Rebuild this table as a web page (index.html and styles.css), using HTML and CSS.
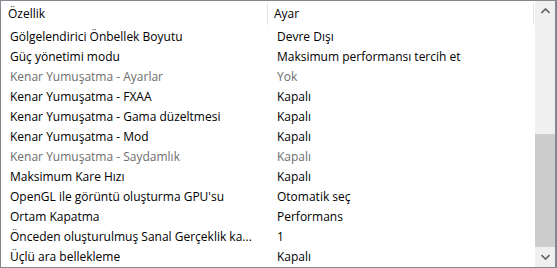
FILE: index.html
```html
<!DOCTYPE html>
<html lang="tr">
<head>
<meta charset="utf-8">
<link rel="stylesheet" href="styles.css">
</head>
<body>
<div class="listview">
  <div class="main">
    <div class="header">
      <div class="hcell c1">Özellik</div>
      <div class="hcell c2">Ayar</div>
      <div class="hcell c3"></div>
    </div>
    <div class="rows">
      <div class="row"><span class="c1">Gölgelendirici Önbellek Boyutu</span><span class="c2">Devre Dışı</span></div>
      <div class="row"><span class="c1">Güç yönetimi modu</span><span class="c2">Maksimum performansı tercih et</span></div>
      <div class="row dim"><span class="c1">Kenar Yumuşatma - Ayarlar</span><span class="c2">Yok</span></div>
      <div class="row"><span class="c1">Kenar Yumuşatma - FXAA</span><span class="c2">Kapalı</span></div>
      <div class="row"><span class="c1">Kenar Yumuşatma - Gama düzeltmesi</span><span class="c2">Kapalı</span></div>
      <div class="row"><span class="c1">Kenar Yumuşatma - Mod</span><span class="c2">Kapalı</span></div>
      <div class="row dim"><span class="c1">Kenar Yumuşatma - Saydamlık</span><span class="c2">Kapalı</span></div>
      <div class="row"><span class="c1">Maksimum Kare Hızı</span><span class="c2">Kapalı</span></div>
      <div class="row"><span class="c1">OpenGL ile görüntü oluşturma GPU'su</span><span class="c2">Otomatik seç</span></div>
      <div class="row"><span class="c1">Ortam Kapatma</span><span class="c2">Performans</span></div>
      <div class="row"><span class="c1">Önceden oluşturulmuş Sanal Gerçeklik ka...</span><span class="c2">1</span></div>
      <div class="row"><span class="c1">Üçlü ara bellekleme</span><span class="c2">Kapalı</span></div>
    </div>
  </div>
  <div class="scrollbar">
    <div class="arrow up"><svg width="9" height="6" viewBox="0 0 9 6"><path d="M0.5 5 L4.5 1 L8.5 5" fill="none" stroke="#606060" stroke-width="1.6"/></svg></div>
    <div class="track">
      <div class="gap"></div>
      <div class="thumb"></div>
    </div>
    <div class="arrow down"><svg width="9" height="6" viewBox="0 0 9 6"><path d="M0.5 1 L4.5 5 L8.5 1" fill="none" stroke="#606060" stroke-width="1.6"/></svg></div>
  </div>
</div>
</body>
</html>
```
FILE: styles.css
```css
html, body {
  margin: 0;
  padding: 0;
  background: #ffffff;
}
.listview {
  width: 557px;
  height: 268px;
  box-sizing: border-box;
  border: 1px solid #828790;
  border-right-width: 2px;
  display: flex;
  font-family: "Open Sans", "Noto Sans", sans-serif;
  font-size: 12px;
  color: #000;
  overflow: hidden;
}
.main {
  flex: 1;
  display: flex;
  flex-direction: column;
  min-width: 0;
}
.header {
  height: 26px;
  flex: none;
  display: flex;
  align-items: center;
}
.hcell {
  height: 22px;
  line-height: 22px;
  box-sizing: border-box;
  white-space: nowrap;
}
.header .c1 {
  width: 267px;
  padding-left: 7px;
  border-right: 1px solid #e5e5e5;
}
.header .c2 {
  width: 266px;
  padding-left: 6px;
  border-right: 1px solid #e5e5e5;
}
.header .c3 {
  flex: 1;
}
.rows {
  display: flex;
  flex-direction: column;
}
.row {
  height: 20px;
  flex: none;
  line-height: 20px;
  display: flex;
  white-space: nowrap;
}
.row .c1 {
  width: 267px;
  padding-left: 9px;
  box-sizing: border-box;
  overflow: hidden;
}
.row .c2 {
  padding-left: 9px;
}
.row.dim {
  color: #6d6d6d;
}
.scrollbar {
  width: 20px;
  background: #f0f0f0;
  display: flex;
  flex-direction: column;
}
.arrow {
  height: 20px;
  flex: none;
  display: flex;
  align-items: center;
  justify-content: center;
}
.track {
  flex: 1;
  display: flex;
  flex-direction: column;
}
.gap {
  height: 113px;
  flex: none;
}
.thumb {
  flex: 1;
  background: #cdcdcd;
}
```
